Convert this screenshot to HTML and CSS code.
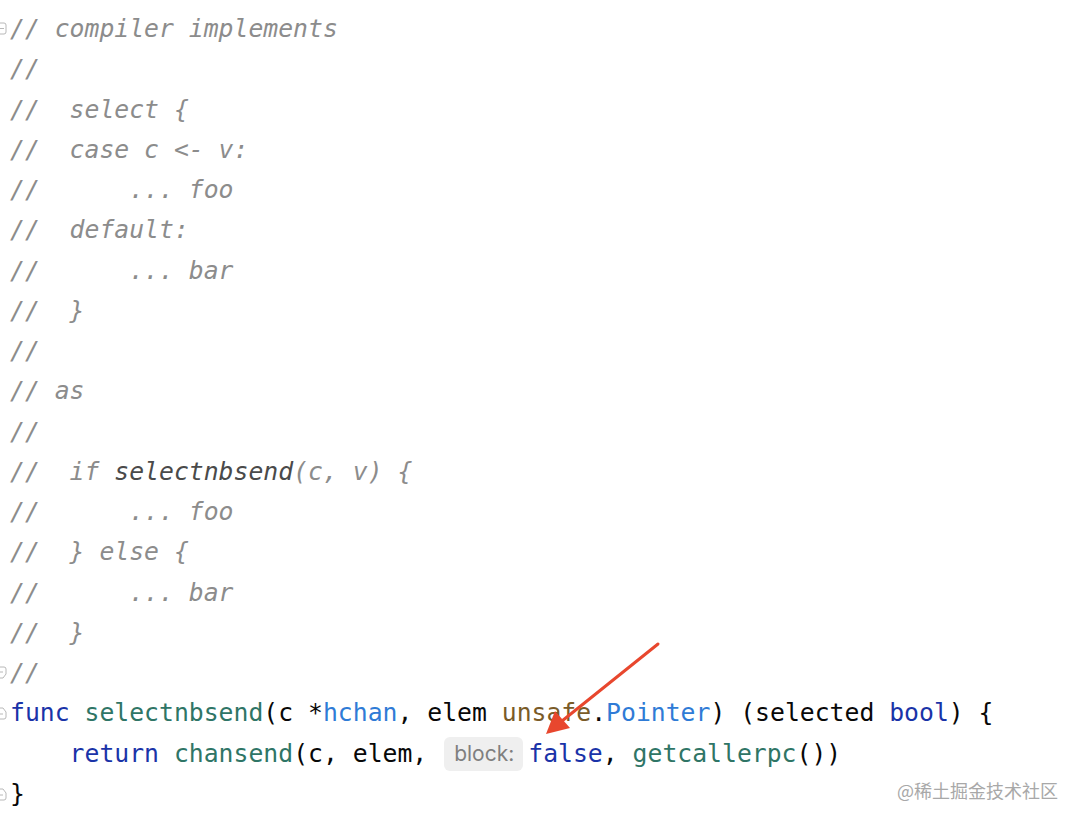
FILE: index.html
```html
<!DOCTYPE html>
<html>
<head>
<meta charset="utf-8">
<link rel="stylesheet" href="styles.css">
</head>
<body>
<div class="editor">
  <div class="line"><span class="fold"><svg width="8" height="14" viewBox="0 0 8 14"><rect x="-4" y="1" width="10" height="11" rx="2" fill="#fff" stroke="#b8b8b8"/><line x1="-1" y1="6.5" x2="4" y2="6.5" stroke="#b8b8b8"/></svg></span><span class="cm">// compiler implements</span></div>
  <div class="line"><span class="cm">//</span></div>
  <div class="line"><span class="cm">//  select {</span></div>
  <div class="line"><span class="cm">//  case c &lt;- v:</span></div>
  <div class="line"><span class="cm">//      ... foo</span></div>
  <div class="line"><span class="cm">//  default:</span></div>
  <div class="line"><span class="cm">//      ... bar</span></div>
  <div class="line"><span class="cm">//  }</span></div>
  <div class="line"><span class="cm">//</span></div>
  <div class="line"><span class="cm">// as</span></div>
  <div class="line"><span class="cm">//</span></div>
  <div class="line"><span class="cm">//  if <span class="cm-ref">selectnbsend</span>(c, v) {</span></div>
  <div class="line"><span class="cm">//      ... foo</span></div>
  <div class="line"><span class="cm">//  } else {</span></div>
  <div class="line"><span class="cm">//      ... bar</span></div>
  <div class="line"><span class="cm">//  }</span></div>
  <div class="line"><span class="fold"><svg width="8" height="14" viewBox="0 0 8 14"><path d="M-4 1 H4 Q6 1 6 3 V8 L3 12 H-4 Z" fill="#fff" stroke="#b8b8b8"/><line x1="-1" y1="6" x2="3" y2="6" stroke="#b8b8b8"/></svg></span><span class="cm">//</span></div>
  <div class="line"><span class="fold"><svg width="8" height="14" viewBox="0 0 8 14"><path d="M-4 13 H4 Q6 13 6 11 V6 L3 2 H-4 Z" fill="#fff" stroke="#b8b8b8"/><line x1="-1" y1="8" x2="3" y2="8" stroke="#b8b8b8"/></svg></span><span class="kw">func</span> <span class="fn">selectnbsend</span>(c *<span class="ty">hchan</span>, elem <span class="pkg">unsafe</span>.<span class="ty">Pointer</span>) (selected <span class="kw">bool</span>) {</div>
  <div class="line">    <span class="kw">return</span> <span class="fn">chansend</span>(c, elem, <span class="hint">block:</span><span class="kw">false</span>, <span class="fn">getcallerpc</span>())</div>
  <div class="line"><span class="fold"><svg width="8" height="14" viewBox="0 0 8 14"><path d="M-4 13 H4 Q6 13 6 11 V6 L3 2 H-4 Z" fill="#fff" stroke="#b8b8b8"/><line x1="-1" y1="8" x2="3" y2="8" stroke="#b8b8b8"/></svg></span>}</div>
</div>
<svg class="arrow" width="1080" height="823" viewBox="0 0 1080 823">
  <line x1="658" y1="644" x2="562" y2="721" stroke="#e8472e" stroke-width="3" stroke-linecap="round"/>
  <polygon points="546,734 555,711 570,728" fill="#e8472e"/>
</svg>
<div class="watermark">@稀土掘金技术社区</div>
</body>
</html>
```
FILE: styles.css
```css
html, body {
  margin: 0;
  padding: 0;
  background: #ffffff;
}
body {
  width: 1080px;
  height: 823px;
  overflow: hidden;
  position: relative;
}
.editor {
  padding: 9px 0 0 10px;
  font-family: "DejaVu Sans Mono", "Liberation Mono", monospace;
  font-size: 24.75px;
  color: #080808;
}
.line {
  height: 40.25px;
  line-height: 40.25px;
  white-space: pre;
  position: relative;
}
.fold {
  position: absolute;
  left: -10px;
  top: 13px;
  width: 8px;
  height: 14px;
  line-height: 0;
}
.cm {
  color: #8c8c8c;
  font-style: italic;
}
.cm-ref {
  color: #4a4a4a;
}
.kw {
  color: #1a33a8;
}
.fn {
  color: #2f7566;
}
.ty {
  color: #2f7bd6;
}
.pkg {
  color: #7a5b28;
}
.hint {
  display: inline-block;
  font-family: "Inter", "Liberation Sans", sans-serif;
  font-size: 21px;
  color: #7f7f7f;
  background: #efefef;
  border-radius: 6px;
  line-height: 34px;
  height: 34px;
  padding: 0 9px 0 10px;
  margin-left: 2px;
  margin-right: 5px;
  vertical-align: 1px;
}
.arrow {
  position: absolute;
  left: 0;
  top: 0;
  pointer-events: none;
}
.watermark {
  position: absolute;
  left: 897px;
  top: 778px;
  font-family: "Noto Sans CJK SC", "Noto Sans", sans-serif;
  font-size: 18px;
  line-height: 24px;
  color: #a8a8a8;
}
```
